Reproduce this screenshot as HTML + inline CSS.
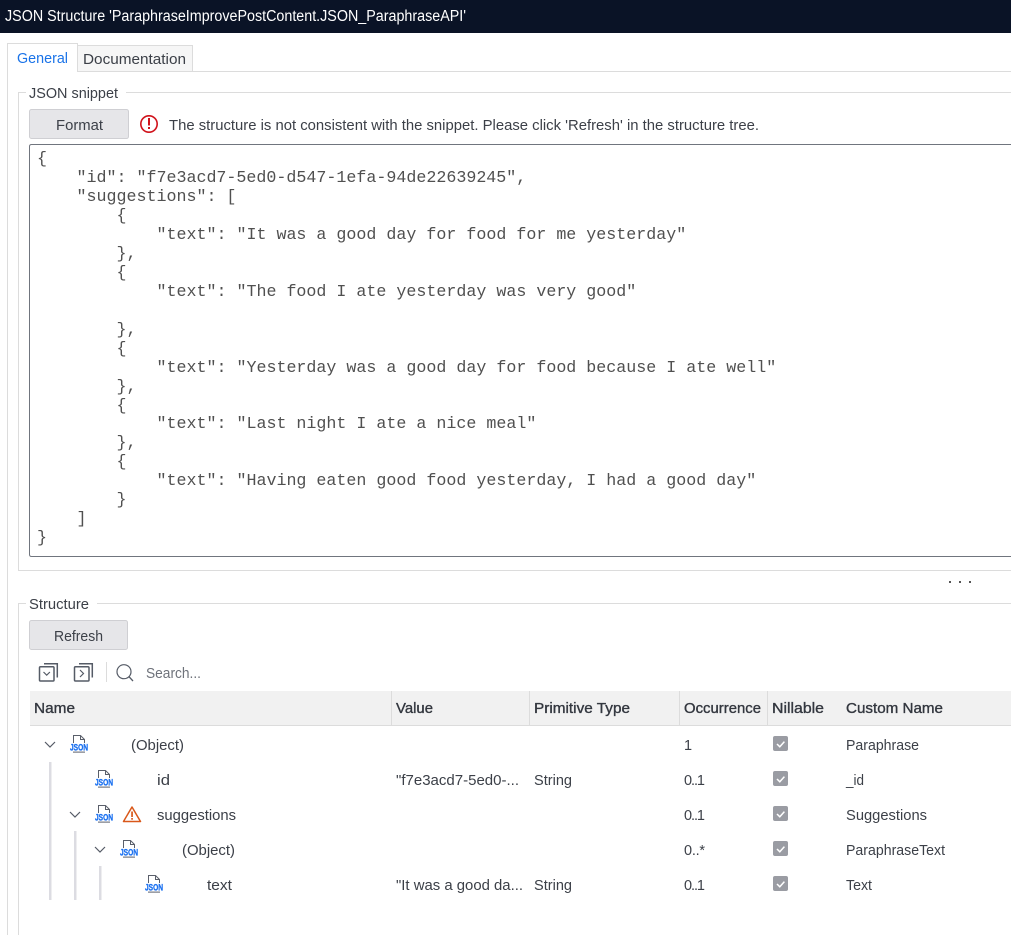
<!DOCTYPE html>
<html><head><meta charset="utf-8"><title>JSON Structure</title>
<style>
html,body{margin:0;padding:0;background:#fff;width:1011px;height:935px;overflow:hidden}
svg{display:block;position:absolute;left:0;top:0}
text{font-family:"Liberation Sans",sans-serif;font-size:14.5px;fill:#3c4048}
.h{font-size:14.5px;fill:#33373f;stroke:#33373f;stroke-width:.35px}
.m{font-family:"Liberation Mono",monospace;font-size:16.67px;fill:#505050;white-space:pre}
.j{font-family:"Liberation Sans",sans-serif;font-weight:bold;font-size:9.5px;fill:#1a70f0;stroke:#1a70f0;stroke-width:.35px}
</style></head><body>
<svg width="1011" height="935" viewBox="0 0 1011 935" xmlns="http://www.w3.org/2000/svg">
<rect width="1011" height="33" fill="#0a1326"/>
<text x="5" y="21" textLength="461" lengthAdjust="spacingAndGlyphs" style="fill:#fff;font-size:15.5px">JSON Structure 'ParaphraseImprovePostContent.JSON_ParaphraseAPI'</text>

<!-- tabs -->
<path d="M77.5 71.5H1011" stroke="#dcdcdc" fill="none"/>
<rect x="77.5" y="45.5" width="115" height="26" fill="#f6f6f6" stroke="#dcdcdc"/>
<path d="M7.5 935V43.5H77.5V72" stroke="#dcdcdc" fill="#fff"/>
<text x="17" y="63" textLength="51" lengthAdjust="spacingAndGlyphs" style="fill:#1a73e8">General</text>
<text x="83" y="64" textLength="103" lengthAdjust="spacingAndGlyphs">Documentation</text>

<!-- snippet group -->
<path d="M26 92.5H18.5V570.5H1011M126 92.5H1011" stroke="#dcdcdc" fill="none"/>
<text x="29" y="98" textLength="89" lengthAdjust="spacingAndGlyphs">JSON snippet</text>
<rect x="29.5" y="109.5" width="99" height="29" rx="2" fill="#e6e6e9" stroke="#cfcfd3"/>
<text x="56" y="130" textLength="47" lengthAdjust="spacingAndGlyphs">Format</text>
<circle cx="149" cy="124" r="8.2" fill="none" stroke="#d0121b" stroke-width="1.6"/>
<rect x="148" y="118" width="2" height="7.5" fill="#d0121b"/>
<rect x="148" y="127" width="2" height="2" fill="#d0121b"/>
<text x="169" y="130" textLength="590" lengthAdjust="spacingAndGlyphs">The structure is not consistent with the snippet. Please click 'Refresh' in the structure tree.</text>
<path d="M1011 144.5H31.5Q29.5 144.5 29.5 146.5V554.5Q29.5 556.5 31.5 556.5H1011" fill="#fff" stroke="#70757e"/>

<g>
<text class="m" x="37" y="163">{</text>
<text class="m" x="76.5" y="182" xml:space="preserve">"id": "f7e3acd7-5ed0-d547-1efa-94de22639245",</text>
<text class="m" x="76.5" y="201" xml:space="preserve">"suggestions": [</text>
<text class="m" x="116.5" y="220">{</text>
<text class="m" x="156.5" y="239" xml:space="preserve">"text": "It was a good day for food for me yesterday"</text>
<text class="m" x="116.5" y="258">},</text>
<text class="m" x="116.5" y="277">{</text>
<text class="m" x="156.5" y="296" xml:space="preserve">"text": "The food I ate yesterday was very good"</text>
<text class="m" x="116.5" y="334">},</text>
<text class="m" x="116.5" y="353">{</text>
<text class="m" x="156.5" y="372" xml:space="preserve">"text": "Yesterday was a good day for food because I ate well"</text>
<text class="m" x="116.5" y="391">},</text>
<text class="m" x="116.5" y="410">{</text>
<text class="m" x="156.5" y="428" xml:space="preserve">"text": "Last night I ate a nice meal"</text>
<text class="m" x="116.5" y="447">},</text>
<text class="m" x="116.5" y="466">{</text>
<text class="m" x="156.5" y="485" xml:space="preserve">"text": "Having eaten good food yesterday, I had a good day"</text>
<text class="m" x="116.5" y="504">}</text>
<text class="m" x="76.5" y="523">]</text>
<text class="m" x="37" y="542">}</text>
</g>

<!-- splitter dots -->
<rect x="949" y="581" width="2" height="2" fill="#555"/>
<rect x="959" y="581" width="2" height="2" fill="#555"/>
<rect x="969" y="581" width="2" height="2" fill="#555"/>

<!-- structure group -->
<path d="M26 603.5H18.5V935M97 603.5H1011" stroke="#dcdcdc" fill="none"/>
<text x="29" y="609" textLength="60" lengthAdjust="spacingAndGlyphs">Structure</text>
<rect x="29.5" y="620.5" width="98" height="29" rx="2" fill="#e6e6e9" stroke="#cfcfd3"/>
<text x="54" y="641" textLength="49" lengthAdjust="spacingAndGlyphs">Refresh</text>

<!-- toolbar -->
<g fill="none" stroke="#555b66" stroke-width="1.5">
<rect x="39.5" y="666.8" width="14.5" height="14.2" rx="1"/>
<path d="M44 663.8H57.3V677.5"/>
<path d="M43.5 672l3.2 3.2 3.2-3.2" stroke-width="1.2"/>
<rect x="74.5" y="666.8" width="14.5" height="14.2" rx="1"/>
<path d="M79 663.8H92.3V677.5"/>
<path d="M80 670l3.5 3.5-3.5 3.5" stroke-width="1.2"/>
<circle cx="124" cy="671.7" r="7" stroke-width="1.2"/>
<path d="M129 676.7L133 681" stroke-width="1.3"/>
</g>
<rect x="106" y="662" width="1" height="20" fill="#dcdcdc"/>
<text x="146" y="678" textLength="55" lengthAdjust="spacingAndGlyphs" style="fill:#6e727a">Search...</text>

<!-- table header -->
<rect x="30" y="691" width="981" height="34" fill="#f1f1f1"/>
<rect x="30" y="725" width="981" height="1" fill="#dcdcdc"/>
<rect x="391" y="691" width="1" height="34" fill="#dcdcdc"/>
<rect x="529" y="691" width="1" height="34" fill="#dcdcdc"/>
<rect x="679" y="691" width="1" height="34" fill="#dcdcdc"/>
<rect x="767" y="691" width="1" height="34" fill="#dcdcdc"/>
<text class="h" x="34" y="713" textLength="41" lengthAdjust="spacingAndGlyphs">Name</text>
<text class="h" x="396" y="713" textLength="37" lengthAdjust="spacingAndGlyphs">Value</text>
<text class="h" x="534" y="713" textLength="96" lengthAdjust="spacingAndGlyphs">Primitive Type</text>
<text class="h" x="684" y="713" textLength="77" lengthAdjust="spacingAndGlyphs">Occurrence</text>
<text class="h" x="772" y="713" textLength="52" lengthAdjust="spacingAndGlyphs">Nillable</text>
<text class="h" x="846" y="713" textLength="97" lengthAdjust="spacingAndGlyphs">Custom Name</text>

<!-- tree guides -->
<rect x="49" y="762" width="2.5" height="138" fill="#dcdce2"/>
<rect x="74" y="831" width="2.5" height="69" fill="#dcdce2"/>
<rect x="99" y="866" width="2.5" height="34" fill="#dcdce2"/>

<!-- chevrons -->
<g fill="none" stroke="#555b66" stroke-width="1.2">
<path d="M45 742l5 5 5-5"/>
<path d="M70 812l5 5 5-5"/>
<path d="M95 847l5 5 5-5"/>
</g>

<!-- JSON icons -->
<g transform="translate(70,735)"><path d="M3.5 8V.5H10.5L14.5 4.5V8M10.5 .5V4.5H14.5" fill="none" stroke="#5a5f6a"/><text class="j" x="0" y="15.6" textLength="18" lengthAdjust="spacingAndGlyphs">JSON</text><rect x="3" y="16.6" width="12" height="1" fill="#5a5f6a"/></g>
<g transform="translate(95,770)"><path d="M3.5 8V.5H10.5L14.5 4.5V8M10.5 .5V4.5H14.5" fill="none" stroke="#5a5f6a"/><text class="j" x="0" y="15.6" textLength="18" lengthAdjust="spacingAndGlyphs">JSON</text><rect x="3" y="16.6" width="12" height="1" fill="#5a5f6a"/></g>
<g transform="translate(95,805)"><path d="M3.5 8V.5H10.5L14.5 4.5V8M10.5 .5V4.5H14.5" fill="none" stroke="#5a5f6a"/><text class="j" x="0" y="15.6" textLength="18" lengthAdjust="spacingAndGlyphs">JSON</text><rect x="3" y="16.6" width="12" height="1" fill="#5a5f6a"/></g>
<g transform="translate(120,840)"><path d="M3.5 8V.5H10.5L14.5 4.5V8M10.5 .5V4.5H14.5" fill="none" stroke="#5a5f6a"/><text class="j" x="0" y="15.6" textLength="18" lengthAdjust="spacingAndGlyphs">JSON</text><rect x="3" y="16.6" width="12" height="1" fill="#5a5f6a"/></g>
<g transform="translate(145,875)"><path d="M3.5 8V.5H10.5L14.5 4.5V8M10.5 .5V4.5H14.5" fill="none" stroke="#5a5f6a"/><text class="j" x="0" y="15.6" textLength="18" lengthAdjust="spacingAndGlyphs">JSON</text><rect x="3" y="16.6" width="12" height="1" fill="#5a5f6a"/></g>

<!-- warning -->
<path d="M132 807L140.5 821.5H123.5Z" fill="none" stroke="#d9581a" stroke-width="1.5" stroke-linejoin="round"/>
<rect x="131.2" y="811.5" width="1.7" height="5.5" fill="#d9581a"/>
<rect x="131.2" y="818" width="1.7" height="1.7" fill="#d9581a"/>

<!-- rows -->
<text x="131" y="750" textLength="53" lengthAdjust="spacingAndGlyphs">(Object)</text>
<text x="157" y="785" textLength="13" lengthAdjust="spacingAndGlyphs">id</text>
<text x="157" y="820" textLength="79" lengthAdjust="spacingAndGlyphs">suggestions</text>
<text x="182" y="855" textLength="53" lengthAdjust="spacingAndGlyphs">(Object)</text>
<text x="207" y="890" textLength="25" lengthAdjust="spacingAndGlyphs">text</text>

<text x="396" y="785" textLength="123" lengthAdjust="spacingAndGlyphs">"f7e3acd7-5ed0-...</text>
<text x="396" y="890" textLength="127" lengthAdjust="spacingAndGlyphs">"It was a good da...</text>
<text x="534" y="785" textLength="38" lengthAdjust="spacingAndGlyphs">String</text>
<text x="534" y="890" textLength="38" lengthAdjust="spacingAndGlyphs">String</text>

<text x="684" y="750">1</text>
<text x="684" y="785" textLength="21" lengthAdjust="spacing">0..1</text>
<text x="684" y="820" textLength="21" lengthAdjust="spacing">0..1</text>
<text x="684" y="855" textLength="21" lengthAdjust="spacing">0..*</text>
<text x="684" y="890" textLength="21" lengthAdjust="spacing">0..1</text>

<g>
<rect x="773" y="736" width="15" height="15" rx="2" fill="#9a9ca3"/><path d="M777 744l2.8 2.8 4.6-5.2" fill="none" stroke="#fff" stroke-width="1.5"/>
<rect x="773" y="771" width="15" height="15" rx="2" fill="#9a9ca3"/><path d="M777 779l2.8 2.8 4.6-5.2" fill="none" stroke="#fff" stroke-width="1.5"/>
<rect x="773" y="806" width="15" height="15" rx="2" fill="#9a9ca3"/><path d="M777 814l2.8 2.8 4.6-5.2" fill="none" stroke="#fff" stroke-width="1.5"/>
<rect x="773" y="841" width="15" height="15" rx="2" fill="#9a9ca3"/><path d="M777 849l2.8 2.8 4.6-5.2" fill="none" stroke="#fff" stroke-width="1.5"/>
<rect x="773" y="876" width="15" height="15" rx="2" fill="#9a9ca3"/><path d="M777 884l2.8 2.8 4.6-5.2" fill="none" stroke="#fff" stroke-width="1.5"/>
</g>

<text x="846" y="750" textLength="73" lengthAdjust="spacingAndGlyphs">Paraphrase</text>
<text x="846" y="785" textLength="18" lengthAdjust="spacingAndGlyphs">_id</text>
<text x="846" y="820" textLength="81" lengthAdjust="spacingAndGlyphs">Suggestions</text>
<text x="846" y="855" textLength="99" lengthAdjust="spacingAndGlyphs">ParaphraseText</text>
<text x="846" y="890" textLength="26" lengthAdjust="spacingAndGlyphs">Text</text>
</svg>
</body></html>
